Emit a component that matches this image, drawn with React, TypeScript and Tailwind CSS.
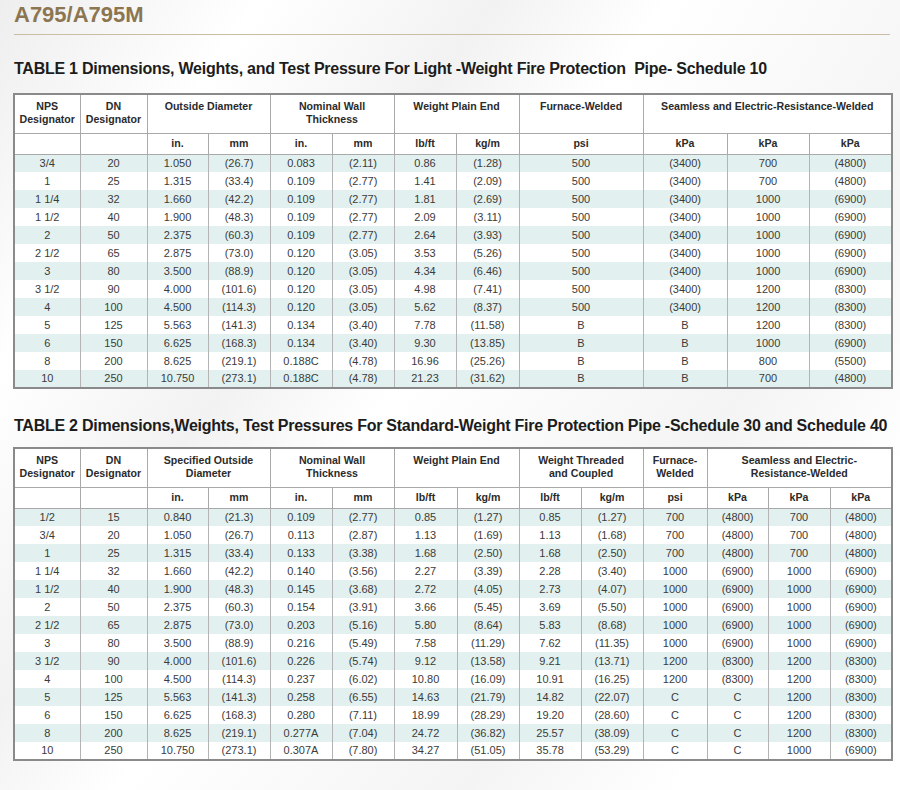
import React from "react";

type Group = { label: React.ReactNode; span: number };

const table1Widths = [66, 67, 61, 62, 62, 62, 62, 63, 124, 84, 82, 83];
const table1Groups: Group[] = [
    { label: <>NPS<br />Designator</>, span: 1 },
    { label: <>DN<br />Designator</>, span: 1 },
    { label: "Outside Diameter", span: 2 },
    { label: <>Nominal Wall<br />Thickness</>, span: 2 },
    { label: "Weight Plain End", span: 2 },
    { label: "Furnace-Welded", span: 1 },
    { label: "Seamless and Electric-Resistance-Welded", span: 3 },
];
const table1Units = ["", "", "in.", "mm", "in.", "mm", "lb/ft", "kg/m", "psi", "kPa", "kPa", "kPa"];
const table1Rows = [
    ["3/4", "20", "1.050", "(26.7)", "0.083", "(2.11)", "0.86", "(1.28)", "500", "(3400)", "700", "(4800)"],
    ["1", "25", "1.315", "(33.4)", "0.109", "(2.77)", "1.41", "(2.09)", "500", "(3400)", "700", "(4800)"],
    ["1 1/4", "32", "1.660", "(42.2)", "0.109", "(2.77)", "1.81", "(2.69)", "500", "(3400)", "1000", "(6900)"],
    ["1 1/2", "40", "1.900", "(48.3)", "0.109", "(2.77)", "2.09", "(3.11)", "500", "(3400)", "1000", "(6900)"],
    ["2", "50", "2.375", "(60.3)", "0.109", "(2.77)", "2.64", "(3.93)", "500", "(3400)", "1000", "(6900)"],
    ["2 1/2", "65", "2.875", "(73.0)", "0.120", "(3.05)", "3.53", "(5.26)", "500", "(3400)", "1000", "(6900)"],
    ["3", "80", "3.500", "(88.9)", "0.120", "(3.05)", "4.34", "(6.46)", "500", "(3400)", "1000", "(6900)"],
    ["3 1/2", "90", "4.000", "(101.6)", "0.120", "(3.05)", "4.98", "(7.41)", "500", "(3400)", "1200", "(8300)"],
    ["4", "100", "4.500", "(114.3)", "0.120", "(3.05)", "5.62", "(8.37)", "500", "(3400)", "1200", "(8300)"],
    ["5", "125", "5.563", "(141.3)", "0.134", "(3.40)", "7.78", "(11.58)", "B", "B", "1200", "(8300)"],
    ["6", "150", "6.625", "(168.3)", "0.134", "(3.40)", "9.30", "(13.85)", "B", "B", "1000", "(6900)"],
    ["8", "200", "8.625", "(219.1)", "0.188C", "(4.78)", "16.96", "(25.26)", "B", "B", "800", "(5500)"],
    ["10", "250", "10.750", "(273.1)", "0.188C", "(4.78)", "21.23", "(31.62)", "B", "B", "700", "(4800)"],
];

const table2Widths = [66, 67, 61, 62, 62, 62, 63, 62, 62, 62, 64, 61, 62, 62];
const table2Groups: Group[] = [
    { label: <>NPS<br />Designator</>, span: 1 },
    { label: <>DN<br />Designator</>, span: 1 },
    { label: <>Specified Outside<br />Diameter</>, span: 2 },
    { label: <>Nominal Wall<br />Thickness</>, span: 2 },
    { label: "Weight Plain End", span: 2 },
    { label: <>Weight Threaded<br />and Coupled</>, span: 2 },
    { label: <>Furnace-<br />Welded</>, span: 1 },
    { label: <>Seamless and Electric-<br />Resistance-Welded</>, span: 3 },
];
const table2Units = ["", "", "in.", "mm", "in.", "mm", "lb/ft", "kg/m", "lb/ft", "kg/m", "psi", "kPa", "kPa", "kPa"];
const table2Rows = [
    ["1/2", "15", "0.840", "(21.3)", "0.109", "(2.77)", "0.85", "(1.27)", "0.85", "(1.27)", "700", "(4800)", "700", "(4800)"],
    ["3/4", "20", "1.050", "(26.7)", "0.113", "(2.87)", "1.13", "(1.69)", "1.13", "(1.68)", "700", "(4800)", "700", "(4800)"],
    ["1", "25", "1.315", "(33.4)", "0.133", "(3.38)", "1.68", "(2.50)", "1.68", "(2.50)", "700", "(4800)", "700", "(4800)"],
    ["1 1/4", "32", "1.660", "(42.2)", "0.140", "(3.56)", "2.27", "(3.39)", "2.28", "(3.40)", "1000", "(6900)", "1000", "(6900)"],
    ["1 1/2", "40", "1.900", "(48.3)", "0.145", "(3.68)", "2.72", "(4.05)", "2.73", "(4.07)", "1000", "(6900)", "1000", "(6900)"],
    ["2", "50", "2.375", "(60.3)", "0.154", "(3.91)", "3.66", "(5.45)", "3.69", "(5.50)", "1000", "(6900)", "1000", "(6900)"],
    ["2 1/2", "65", "2.875", "(73.0)", "0.203", "(5.16)", "5.80", "(8.64)", "5.83", "(8.68)", "1000", "(6900)", "1000", "(6900)"],
    ["3", "80", "3.500", "(88.9)", "0.216", "(5.49)", "7.58", "(11.29)", "7.62", "(11.35)", "1000", "(6900)", "1000", "(6900)"],
    ["3 1/2", "90", "4.000", "(101.6)", "0.226", "(5.74)", "9.12", "(13.58)", "9.21", "(13.71)", "1200", "(8300)", "1200", "(8300)"],
    ["4", "100", "4.500", "(114.3)", "0.237", "(6.02)", "10.80", "(16.09)", "10.91", "(16.25)", "1200", "(8300)", "1200", "(8300)"],
    ["5", "125", "5.563", "(141.3)", "0.258", "(6.55)", "14.63", "(21.79)", "14.82", "(22.07)", "C", "C", "1200", "(8300)"],
    ["6", "150", "6.625", "(168.3)", "0.280", "(7.11)", "18.99", "(28.29)", "19.20", "(28.60)", "C", "C", "1200", "(8300)"],
    ["8", "200", "8.625", "(219.1)", "0.277A", "(7.04)", "24.72", "(36.82)", "25.57", "(38.09)", "C", "C", "1200", "(8300)"],
    ["10", "250", "10.750", "(273.1)", "0.307A", "(7.80)", "34.27", "(51.05)", "35.78", "(53.29)", "C", "C", "1000", "(6900)"],
];

const SpecTable = ({ widths, groups, units, rows }: { widths: number[]; groups: Group[]; units: string[]; rows: string[][] }) => {
    return (
        <table className="w-[878px] table-fixed border-collapse border-2 border-[#8a8a8a] bg-white text-center text-[11px]">
            <colgroup>
                {widths.map((w, i) => (
                    <col key={i} style={{ width: w }} />
                ))}
            </colgroup>
            <thead>
                {/* group headings */}
                <tr>
                    {groups.map((g, i) => (
                        <th key={i} colSpan={g.span} className="h-[39px] border border-[#a9a9a9] px-1 pt-[5px] align-top text-[10.6px] leading-[13px] font-bold text-[#2b2b2b]">
                            {g.label}
                        </th>
                    ))}
                </tr>
                {/* units */}
                <tr>
                    {units.map((u, i) => (
                        <th key={i} className="h-[21px] border border-[#a9a9a9] p-0 align-middle text-[10.6px] leading-[13px] font-bold text-[#2b2b2b]">
                            {u}
                        </th>
                    ))}
                </tr>
            </thead>
            <tbody>
                {rows.map((r, ri) => (
                    <tr key={ri} className={ri % 2 === 0 ? "bg-[#e2f1ef]" : "bg-white"}>
                        {r.map((c, ci) => (
                            <td key={ci} className="h-[18px] border-x border-[#b4b4b4] p-0 align-middle leading-[13px] text-[#3b3b3b]">
                                {c}
                            </td>
                        ))}
                    </tr>
                ))}
            </tbody>
        </table>
    );
};

const App = () => {
    return (
        <div className="w-[900px] h-[790px] overflow-hidden bg-white bg-[linear-gradient(125deg,#eeeeee_0%,#ffffff_18%,#f2f2f2_34%,#ffffff_46%,#f4f4f4_70%,#ffffff_85%)] px-[13px] pt-[1px] font-['Liberation_Sans',Arial,sans-serif]">
            <h1 className="pl-[1px] text-[22px] leading-[28px] font-bold text-[#8c7651]">A795/A795M</h1>
            <div className="mt-[5px] ml-[1px] h-px w-[876px] bg-[#c9bea4]" />

            {/* Table 1 */}
            <h2 className="mt-[24px] pl-[1px] text-[16px] leading-[20px] tracking-[-0.25px] font-bold whitespace-nowrap text-[#1c1c1c]">
                TABLE 1 Dimensions, Weights, and Test Pressure For Light -Weight Fire Protection&nbsp; Pipe- Schedule 10
            </h2>
            <div className="mt-[14px]">
                <SpecTable widths={table1Widths} groups={table1Groups} units={table1Units} rows={table1Rows} />
            </div>

            {/* Table 2 */}
            <h2 className="mt-[27px] pl-[1px] text-[16px] leading-[20px] tracking-[-0.25px] font-bold whitespace-nowrap text-[#1c1c1c]">
                TABLE 2 Dimensions,Weights, Test Pressures For Standard-Weight Fire Protection Pipe -Schedule 30 and Schedule 40
            </h2>
            <div className="mt-[11px]">
                <SpecTable widths={table2Widths} groups={table2Groups} units={table2Units} rows={table2Rows} />
            </div>
        </div>
    );
};

export default App;
